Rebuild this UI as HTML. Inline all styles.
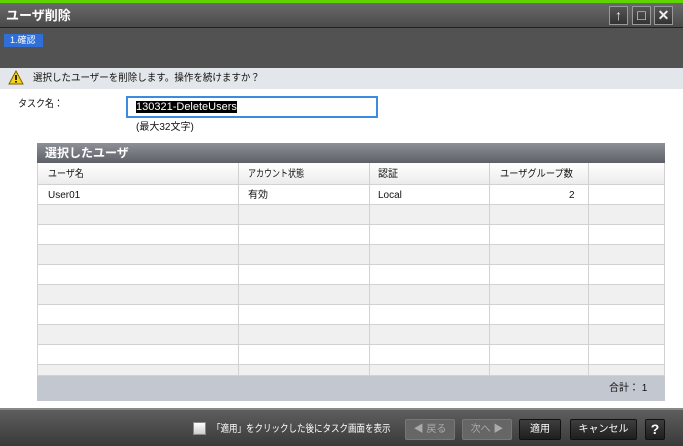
<!DOCTYPE html>
<html><head><meta charset="utf-8"><style>
*{margin:0;padding:0;box-sizing:border-box}
body{width:683px;height:446px;overflow:hidden;background:#fff;font-family:"Liberation Sans","Noto Sans CJK JP",sans-serif;font-size:10px;line-height:12px;color:#111;position:relative}
.a{position:absolute;white-space:nowrap}
.sx{display:inline-block;transform-origin:left center}
.tb{left:0;top:0;width:683px;height:3px;background:#5fd400}
.title{left:0;top:3px;width:683px;height:25px;background:linear-gradient(#6a6a6a,#4a4a4a);border-bottom:1px solid #222;color:#fff;font-weight:bold;font-size:13px;line-height:16px;padding:5px 6px}
.wb{top:6px;width:19px;height:19px;border:1px solid #999;background:linear-gradient(#555,#333);color:#eee;font-size:14px;text-align:center;line-height:16px;font-weight:bold}
.step{left:0;top:28px;width:683px;height:40px;background:#525252}
.tab{left:4px;top:34px;width:39px;height:13px;background:#2f6fd6;color:#fff;font-size:9px;padding-left:6px;line-height:13px}
.msg{left:0;top:68px;width:683px;height:21px;background:#e3e6ea}
.panel{left:37px;top:143px;width:628px;height:258px;background:#fff}
.ph{left:0;top:0;width:628px;height:20px;background:linear-gradient(#8e9098,#5e6068);color:#fff;font-weight:bold;font-size:12px;line-height:16px;padding:2px 8px}
.row{left:0;width:628px;height:20px;border-bottom:1px solid #d2d2d2}
.c{position:absolute;top:0;height:100%;border-left:1px solid #d2d2d2}
.sum{left:0;top:233px;width:628px;height:25px;background:#c3c7d0}
.bot{left:0;top:408px;width:683px;height:38px;background:linear-gradient(#5e5e5e,#3a3a3a);border-top:2px solid #888}
.btn{top:419px;height:21px;border:1px solid #111;background:linear-gradient(#3e3e3e,#1e1e1e);color:#fff;font-size:10px;text-align:center;line-height:19px;border-radius:2px}
.dis{background:#666;border-color:#777;color:#aaa}
</style></head><body>
<div class="a tb"></div>
<div class="a title">ユーザ削除</div>
<div class="a wb" style="left:609px">↑</div>
<div class="a wb" style="left:632px">□</div>
<div class="a wb" style="left:654px">✕</div>
<div class="a step"></div>
<div class="a tab">1.確認</div>
<div class="a msg"></div>
<svg class="a" style="left:8px;top:70px" width="16" height="15"><polygon points="8,1 15,14 1,14" fill="#f3d21a" stroke="#806000"/><rect x="7.2" y="5" width="1.6" height="5" fill="#000"/><rect x="7.2" y="11" width="1.6" height="1.6" fill="#000"/></svg>
<div class="a" style="left:33px;top:73px"><span class="sx" style="transform:scaleX(0.95)">選択したユーザーを削除します。操作を続けますか？</span></div>
<div class="a" style="left:18px;top:99px"><span class="sx" style="transform:scaleX(0.9)">タスク名：</span></div>
<div class="a" style="left:126px;top:96px;width:252px;height:22px;border:2px solid #3b8be0;padding:3px 8px;font-size:11px;line-height:13px"><span style="background:#000;color:#fff">130321-DeleteUsers</span></div>
<div class="a" style="left:136px;top:122px">(最大32文字)</div>
<div class="a panel">
<div class="a ph">選択したユーザ</div>
<div class="a row" style="top:20px;height:22px;background:linear-gradient(#fff,#ececec)"></div>
<div class="a row" style="top:42px;background:#fff"></div>
<div class="a row" style="top:62px;background:#f0f0f0"></div>
<div class="a row" style="top:82px;background:#fff"></div>
<div class="a row" style="top:102px;background:#f0f0f0"></div>
<div class="a row" style="top:122px;background:#fff"></div>
<div class="a row" style="top:142px;background:#f0f0f0"></div>
<div class="a row" style="top:162px;background:#fff"></div>
<div class="a row" style="top:182px;background:#f0f0f0"></div>
<div class="a row" style="top:202px;background:#fff"></div>
<div class="a row" style="top:222px;height:11px;background:#f0f0f0"></div>
<div class="a" style="left:0;top:20px;width:628px;height:213px;border-left:1px solid #d2d2d2;border-right:1px solid #d2d2d2">
<div class="c" style="left:200px"></div><div class="c" style="left:331px"></div><div class="c" style="left:451px"></div><div class="c" style="left:550px"></div>
</div>
<div class="a" style="left:11px;top:26px"><span class="sx" style="transform:scaleX(0.9)">ユーザ名</span></div>
<div class="a" style="left:211px;top:26px"><span class="sx" style="transform:scaleX(0.8)">アカウント状態</span></div>
<div class="a" style="left:341px;top:26px">認証</div>
<div class="a" style="left:463px;top:26px"><span class="sx" style="transform:scaleX(0.92)">ユーザグループ数</span></div>
<div class="a" style="left:11px;top:47px">User01</div>
<div class="a" style="left:211px;top:47px">有効</div>
<div class="a" style="left:341px;top:47px">Local</div>
<div class="a" style="left:532px;top:47px">2</div>
<div class="a sum"><span class="a" style="left:572px;top:7px">合計：&nbsp;1</span></div>
</div>
<div class="a bot"></div>
<div class="a" style="left:193px;top:422px;width:13px;height:13px;background:linear-gradient(#fff,#ccc);border:1px solid #888"></div>
<div class="a" style="left:212px;top:424px;color:#fff"><span class="sx" style="transform:scaleX(0.85)">「適用」をクリックした後にタスク画面を表示</span></div>
<div class="a btn dis" style="left:405px;width:50px">◀ 戻る</div>
<div class="a btn dis" style="left:462px;width:50px">次へ ▶</div>
<div class="a btn" style="left:519px;width:42px">適用</div>
<div class="a btn" style="left:570px;width:67px">キャンセル</div>
<div class="a btn" style="left:645px;width:20px;font-weight:bold;font-size:14px">?</div>
</body></html>
